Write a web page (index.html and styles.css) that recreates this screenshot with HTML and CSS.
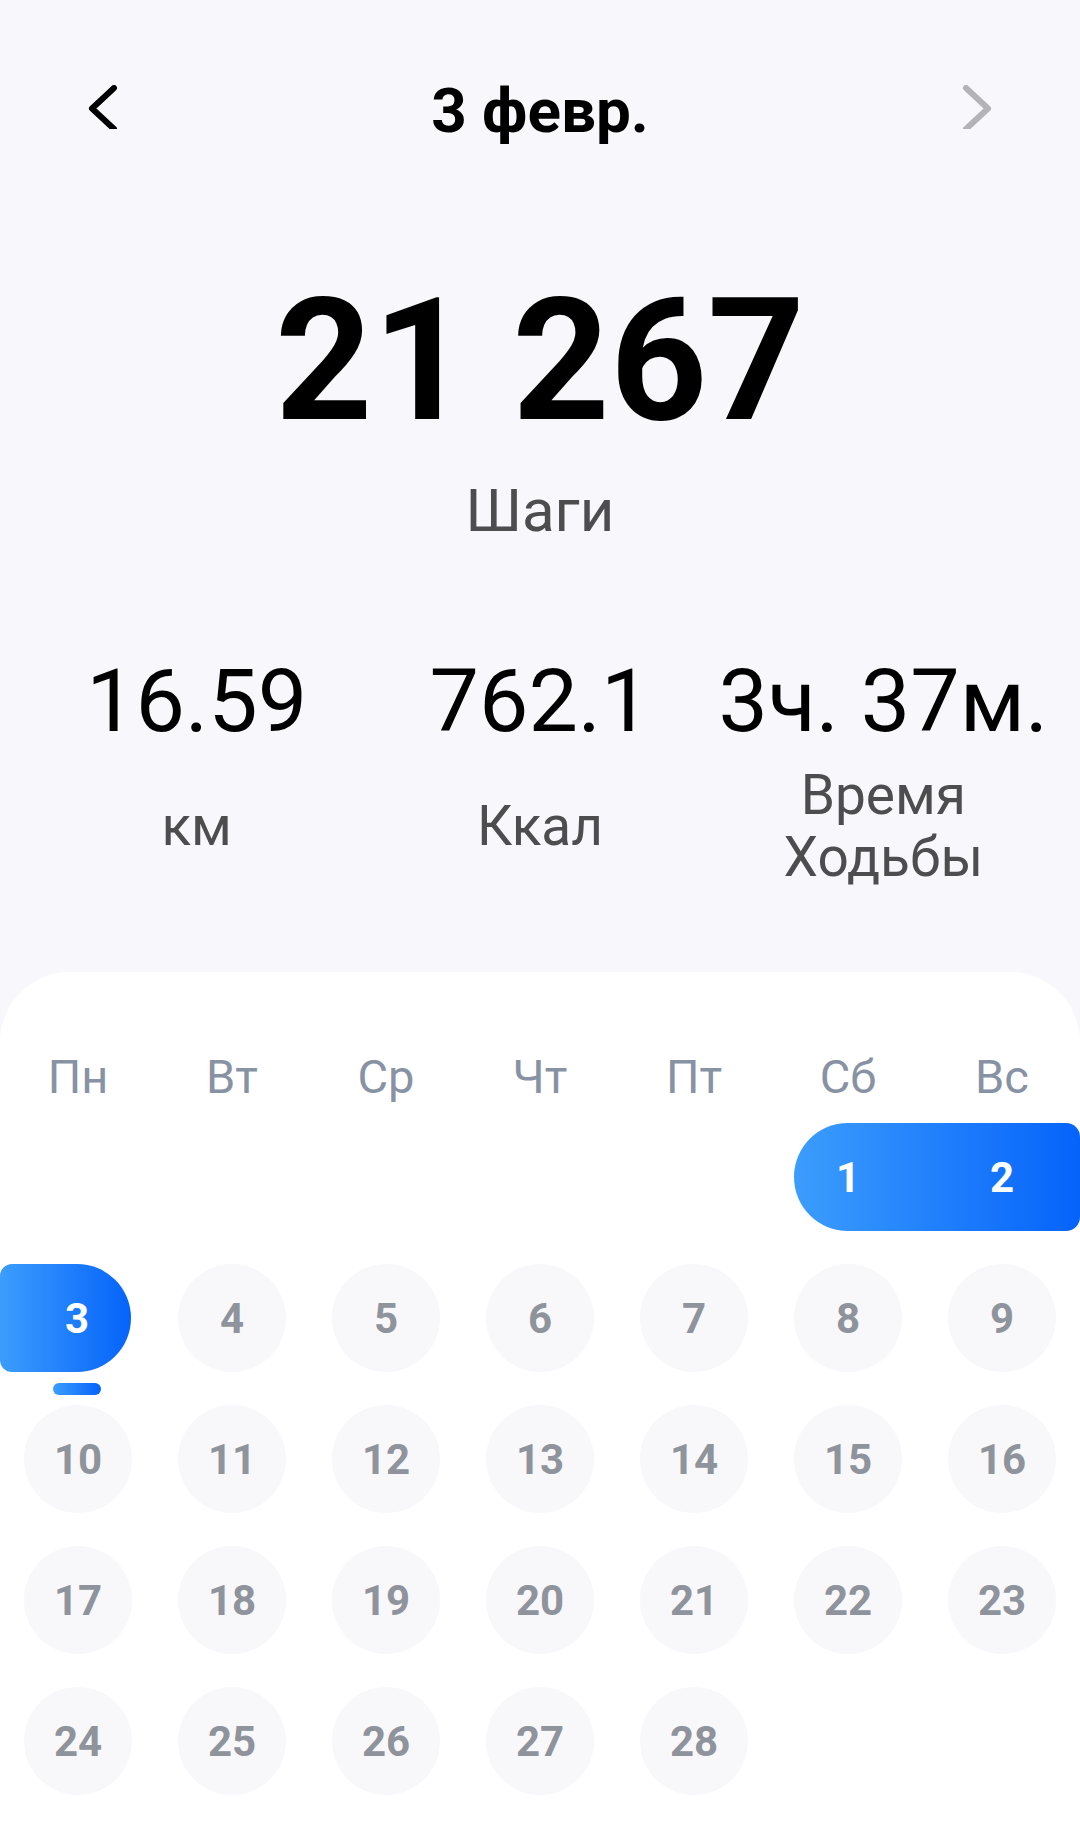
FILE: index.html
```html
<!DOCTYPE html>
<html>
<head>
  <title>Шаги</title>
  <link rel="stylesheet" href="styles.css">
</head>
<body>
  <div class="page">
    <div class="topbar">
      <svg class="nav-icon" viewBox="0 0 30 44"><path d="M26 3 L4 23.5 L26 44" /></svg>
      <div class="date-title">3 февр.</div>
      <svg class="nav-icon next" viewBox="0 0 30 44"><path d="M4 3 L26 23.5 L4 44" /></svg>
    </div>

    <div class="steps">21 267</div>
    <div class="steps-label">Шаги</div>

    <div class="stats">
      <div class="stat">
        <div class="stat-value">16.59</div>
        <div class="stat-label">км</div>
      </div>
      <div class="stat">
        <div class="stat-value">762.1</div>
        <div class="stat-label">Ккал</div>
      </div>
      <div class="stat">
        <div class="stat-value">3ч. 37м.</div>
        <div class="stat-label">Время<br>Ходьбы</div>
      </div>
    </div>

    <div class="calendar">
      <div class="weekdays">
        <div>Пн</div>
        <div>Вт</div>
        <div>Ср</div>
        <div>Чт</div>
        <div>Пт</div>
        <div>Сб</div>
        <div>Вс</div>
      </div>

      <div class="days">
        <div class="range range-end"><span>1</span><span>2</span></div>

        <div class="range range-start today"><span>3</span></div>
        <div class="day"><span>4</span></div>
        <div class="day"><span>5</span></div>
        <div class="day"><span>6</span></div>
        <div class="day"><span>7</span></div>
        <div class="day"><span>8</span></div>
        <div class="day"><span>9</span></div>

        <div class="day"><span>10</span></div>
        <div class="day"><span>11</span></div>
        <div class="day"><span>12</span></div>
        <div class="day"><span>13</span></div>
        <div class="day"><span>14</span></div>
        <div class="day"><span>15</span></div>
        <div class="day"><span>16</span></div>

        <div class="day"><span>17</span></div>
        <div class="day"><span>18</span></div>
        <div class="day"><span>19</span></div>
        <div class="day"><span>20</span></div>
        <div class="day"><span>21</span></div>
        <div class="day"><span>22</span></div>
        <div class="day"><span>23</span></div>

        <div class="day"><span>24</span></div>
        <div class="day"><span>25</span></div>
        <div class="day"><span>26</span></div>
        <div class="day"><span>27</span></div>
        <div class="day"><span>28</span></div>
      </div>
    </div>
  </div>
</body>
</html>
```

FILE: styles.css
```css
html, body {
  margin: 0;
  padding: 0;
}
body {
  font-family: Roboto, "Noto Sans", sans-serif;
  background-color: #f8f8fc;
  color: #000;
}
.page {
  min-height: 100vh;
  display: flex;
  flex-direction: column;
  padding-top: 75px;
  box-sizing: border-box;
}
.topbar {
  display: flex;
  justify-content: space-between;
  align-items: flex-start;
  padding: 0 88px;
}
.nav-icon {
  width: 30px;
  height: 44px;
  margin-top: 10px;
  fill: none;
  stroke: #000;
  stroke-width: 6;
  stroke-linecap: round;
  stroke-linejoin: round;
}
.nav-icon.next {
  stroke: #b3b3b8;
}
.date-title {
  font-size: 62px;
  line-height: 72px;
  font-weight: 700;
}
.steps {
  margin-top: 129px;
  text-align: center;
  font-size: 170px;
  line-height: 170px;
  font-weight: 700;
}
.steps-label {
  margin-top: 29px;
  text-align: center;
  font-size: 60px;
  line-height: 72px;
  color: #4d4d4f;
}
.stats {
  margin-top: 104px;
  padding: 0 25px;
  display: grid;
  grid-template-columns: repeat(3, 1fr);
}
.stat {
  text-align: center;
}
.stat-value {
  font-size: 88px;
  line-height: 100px;
  white-space: nowrap;
}
.stat-label {
  margin-top: 13px;
  min-height: 124px;
  display: flex;
  align-items: center;
  justify-content: center;
  font-size: 55px;
  line-height: 62px;
  color: #4d4d4f;
}
.calendar {
  flex: 1;
  margin-top: 84px;
  padding: 77px 1px 24px;
  background-color: #fff;
  border-radius: 70px 70px 0 0;
}
.weekdays {
  display: grid;
  grid-template-columns: repeat(7, 154px);
  text-align: center;
  font-size: 47px;
  line-height: 56px;
  color: #8792a4;
}
.days {
  margin-top: 18px;
  display: grid;
  grid-template-columns: repeat(7, 154px);
  grid-auto-rows: 108px;
  row-gap: 33px;
  font-size: 42px;
  font-weight: 700;
  color: #8e939c;
}
.day {
  display: flex;
  justify-content: center;
}
.day span,
.range span {
  width: 108px;
  height: 108px;
  display: flex;
  align-items: center;
  justify-content: center;
}
.day span {
  border-radius: 50%;
  background-color: #f8f8fb;
}
.range {
  display: flex;
  color: #fff;
  background: linear-gradient(90deg, #3c9dfd, #0563fa);
  position: relative;
}
.range-end {
  grid-column: 6 / span 2;
  margin-left: 23px;
  margin-right: -1px;
  padding-right: 24px;
  justify-content: space-between;
  border-radius: 54px 14px 14px 54px;
}
.range-start {
  grid-column: 1;
  margin-left: -1px;
  margin-right: 24px;
  justify-content: flex-end;
  border-radius: 12px 54px 54px 12px;
}
.today::after {
  content: '';
  position: absolute;
  left: 53px;
  bottom: -23px;
  width: 48px;
  height: 12px;
  border-radius: 6px;
  background: linear-gradient(90deg, #3c9dfd, #0563fa);
}
```
